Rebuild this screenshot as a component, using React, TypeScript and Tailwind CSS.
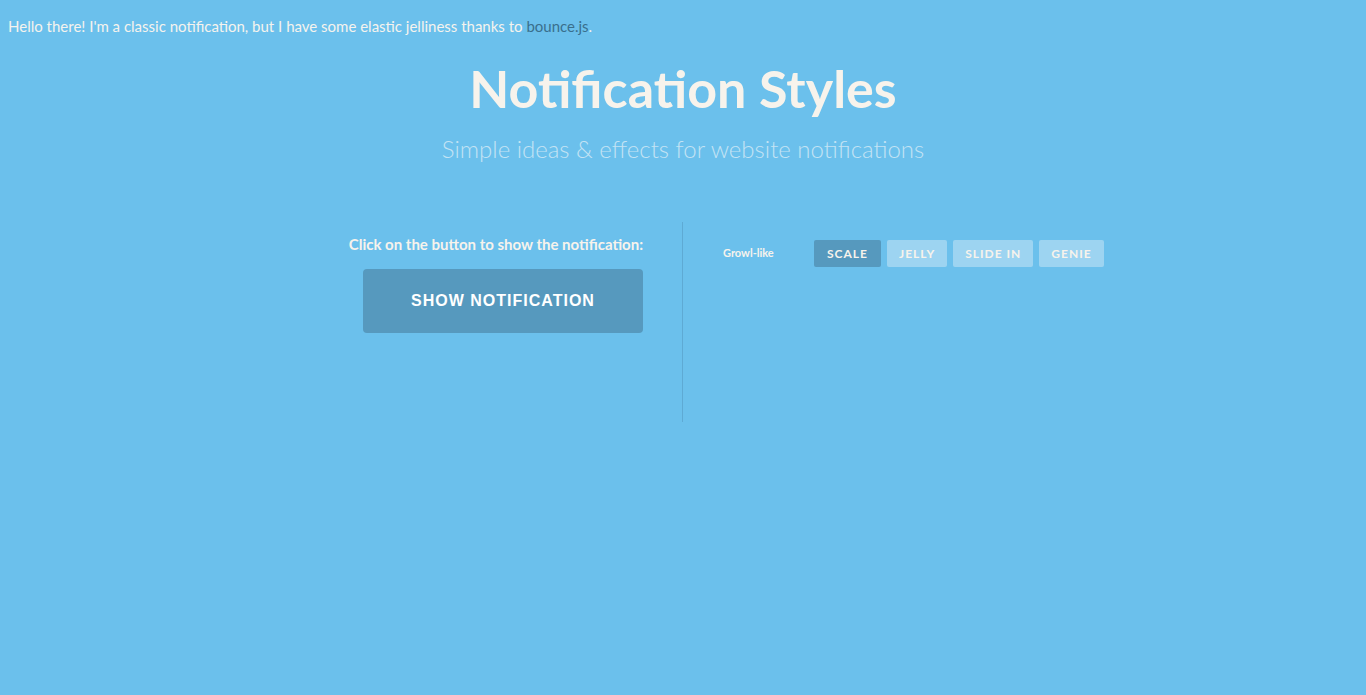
import React from "react";

const tabs = [
  { label: "SCALE", active: true },
  { label: "JELLY", active: false },
  { label: "SLIDE IN", active: false },
  { label: "GENIE", active: false },
];

const App = () => {
  return (
    <div className="min-h-[695px] bg-[#6bc0ec] font-['Lato',sans-serif] text-white">
      {/* top notification */}
      <div className="px-2 pt-[17px] text-[15px] leading-[18px] text-[#f5f3ee]">
        Hello there! I'm a classic notification, but I have some elastic jelliness thanks to{" "}
        <span className="text-[#3a6f8c]">bounce.js</span>.
      </div>

      {/* header */}
      <header className="text-center">
        <h1 className="mt-[21px] text-[52px] font-bold leading-[64px] text-[#f7f3ec]">
          Notification Styles
        </h1>
        <p className="mt-[14px] text-[24px] font-light leading-[30px] text-[#c3e3f4]">
          Simple ideas &amp; effects for website notifications
        </p>
      </header>

      {/* main */}
      <div className="mt-[58px] flex justify-center">
        <div className="flex w-[800px] -translate-x-[1px]">
          <div className="flex w-[400px] shrink-0 flex-col items-end pr-[39px] pt-[14px]">
            <p className="whitespace-nowrap text-[15px] font-bold leading-[16px] text-[#f7f3ec]">
              Click on the button to show the notification:
            </p>
            <button className="mt-[17px] h-[64px] w-[280px] rounded-[4px] bg-[#5699be] font-['Liberation_Sans',sans-serif] text-[16px] font-bold tracking-[1px] text-white">
              SHOW NOTIFICATION
            </button>
          </div>
          <div className="h-[200px] w-px shrink-0 bg-[#5eaad4]" />
          <div className="flex min-w-0 flex-1 items-center self-start whitespace-nowrap pl-[40px] pt-[18px]">
            <span className="w-[91px] shrink-0 text-[11px] font-bold text-[#f7f3ec]">Growl-like</span>
            <div className="flex shrink-0 gap-[6px]">
              {tabs.map((t) => (
                <button
                  key={t.label}
                  className={
                    t.active
                      ? "h-[27px] rounded-[2px] bg-[#5699be] px-[13px] text-[12px] font-bold tracking-[1px] text-[#f7f3ec]"
                      : "h-[27px] rounded-[2px] bg-[#9dd4f1] px-[12px] text-[12px] font-bold tracking-[1px] text-[#f7f3ec]"
                  }
                >
                  {t.label}
                </button>
              ))}
            </div>
          </div>
        </div>
      </div>
    </div>
  );
};

export default App;
